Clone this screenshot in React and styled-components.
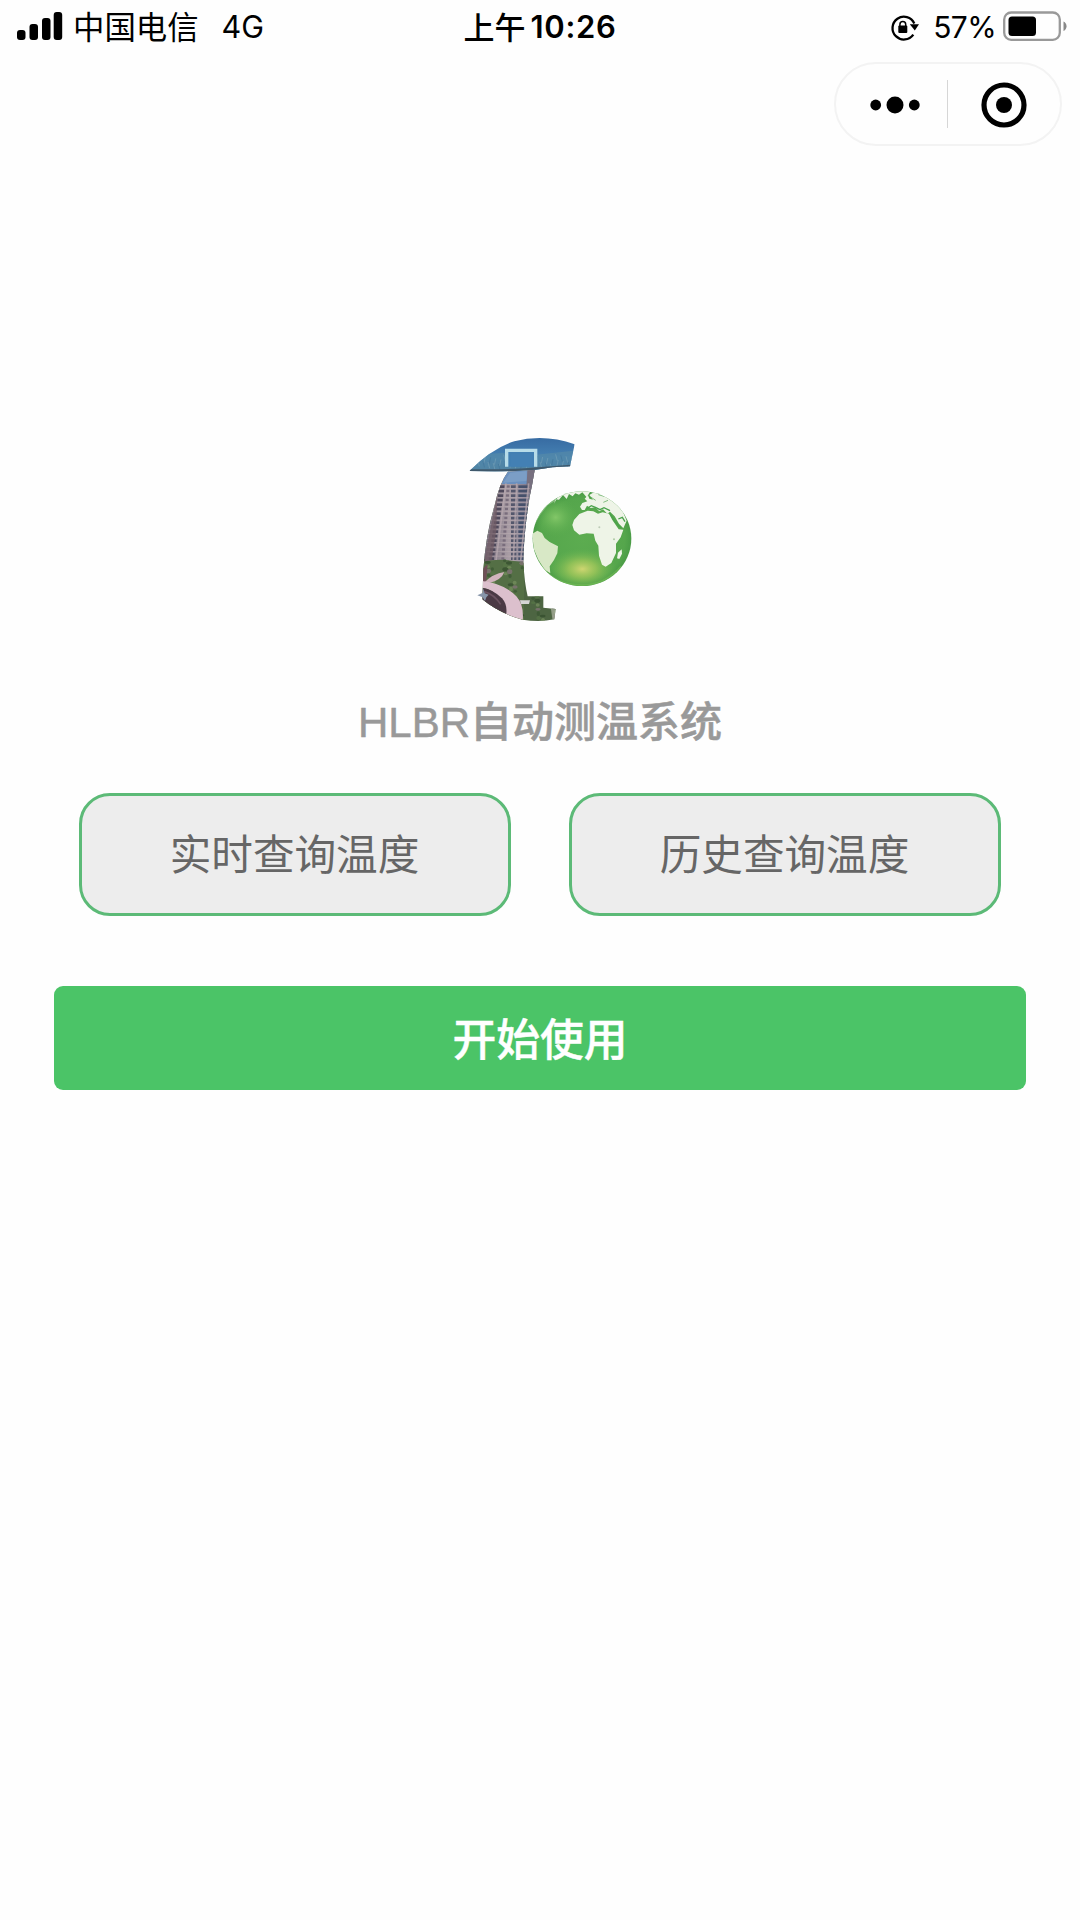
import React from 'react';
import styled, { createGlobalStyle } from 'styled-components';

const GlobalStyle = createGlobalStyle`
  * { box-sizing: border-box; }
  body { margin: 0; background: #fefefe; }
`;

const sans = `"Inter", "Noto Sans CJK SC", sans-serif`;

const Screen = styled.div`
  width: 1080px;
  height: 1920px;
  overflow: hidden;
  display: flex;
  flex-direction: column;
  background: #fefefe;
  color: #000;
  font-family: ${sans};
`;

const StatusBar = styled.header`
  display: grid;
  grid-template-columns: 1fr auto 1fr;
  height: 54px;
  padding: 0 13px 0 17px;
  align-items: center;
  font-size: 31px;
  line-height: 54px;
  white-space: nowrap;
`;

const StatusGroup = styled.div`
  display: flex;
  align-items: center;
  height: 54px;
  justify-content: ${(p) => (p.$end ? 'flex-end' : 'flex-start')};
`;

const Carrier = styled.span`
  margin-left: 10px;
  font-size: 31.4px;
  line-height: 52px;
  padding-bottom: 2px;
  font-family: "Noto Sans CJK SC", sans-serif;
`;

const Network = styled.span`
  margin-left: 23px;
  font-size: 30.5px;
`;

const Clock = styled.div`
  display: flex;
  gap: 5px;
  margin-right: 4px;
  font-family: "Inter", sans-serif;
  font-weight: 600;
  font-size: 31px;
  letter-spacing: 0.7px;
`;

const Meridiem = styled.span`
  font-family: "Noto Sans CJK SC", sans-serif;
  font-weight: 500;
  font-size: 31px;
  letter-spacing: 0;
  line-height: 52px;
  padding-bottom: 2px;
`;

const Percent = styled.span`
  margin: 0 7px 0 13px;
  font-size: 30px;
  letter-spacing: -0.6px;
`;

const CapsuleRow = styled.div`
  display: flex;
  justify-content: flex-end;
  padding: 8px 18px 0 0;
`;

const Capsule = styled.div`
  display: flex;
  align-items: center;
  width: 228px;
  height: 84px;
  border: 2px solid #f3f3f3;
  border-radius: 42px;
`;

const CapsuleButton = styled.button`
  width: ${(p) => p.$width};
  height: 100%;
  padding: ${(p) => p.$pad};
  border: 0;
  background: none;
  color: #000;
  display: flex;
  align-items: center;
  justify-content: center;
`;

const Divider = styled.i`
  width: 1px;
  height: 48px;
  background: #d6d6d6;
`;

const Main = styled.main`
  display: flex;
  flex-direction: column;
  align-items: center;
  padding: 274px 54px 0;
`;

const LogoBox = styled.div`
  width: 230px;
  height: 220px;
  margin-right: 10px;
`;

const Title = styled.h1`
  margin: 52px 0 0;
  height: 62px;
  line-height: 62px;
  font-family: "Liberation Sans", "Noto Sans CJK SC", sans-serif;
  font-size: 42px;
  font-weight: 500;
  color: #999;
  -webkit-text-stroke: 0.5px #999;
  white-space: nowrap;
`;

const Choices = styled.div`
  display: flex;
  gap: 58px;
  margin-top: 39px;
`;

const Choice = styled.button`
  width: 432px;
  height: 123px;
  padding: 0 1px 5px 0;
  border: 3px solid #5cba77;
  border-radius: 31px;
  background: #ededed;
  color: #666;
  font-family: "Noto Sans CJK SC", sans-serif;
  font-size: 41.6px;
  line-height: 60px;
`;

const Start = styled.button`
  width: 972px;
  height: 104px;
  margin-top: 70px;
  padding: 0 0 3px;
  border: 0;
  border-radius: 9px;
  background: #4bc467;
  color: #fff;
  font-family: "Noto Sans CJK SC", sans-serif;
  font-size: 43.8px;
  font-weight: 500;
  line-height: 60px;
  -webkit-text-stroke: 0.4px #fff;
`;

const Signal = () => (
  <svg width="46" height="54" viewBox="0 0 46 54">
    <rect x="0" y="30" width="8.5" height="10" rx="3" />
    <rect x="12.5" y="24" width="8.5" height="16" rx="3" />
    <rect x="25" y="18" width="8.5" height="22" rx="3" />
    <rect x="36.7" y="12" width="8.5" height="28" rx="3" />
  </svg>
);

const RotationLock = () => (
  <svg width="30" height="54" viewBox="0 0 30 54">
    <path d="M23.3 34.6A11.4 11.4 0 1 1 24.3 23.4" fill="none" stroke="#000" strokeWidth="2.3" />
    <path d="M19.8 24.2h9.2l-4.2 6.2z" />
    <rect x="8.3" y="25.5" width="9" height="7.5" rx="1" />
    <path d="M9.9 27v-2.6a2.9 2.9 0 0 1 5.8 0V27" fill="none" stroke="#000" strokeWidth="1.5" />
  </svg>
);

const Battery = () => (
  <svg width="64" height="54" viewBox="0 0 64 54">
    <rect x="1.2" y="12.5" width="55.6" height="27.3" rx="7" fill="none" stroke="#999" strokeWidth="2.3" />
    <rect x="5.5" y="16.5" width="27.5" height="19.5" rx="3.5" />
    <path d="M60.5 21.5c4 1.5 4 8 0 9.5z" fill="#888" />
  </svg>
);

const Dots = () => (
  <svg width="50" height="18" viewBox="0 0 50 18">
    <circle cx="5.7" cy="9" r="5.4" />
    <circle cx="25" cy="9" r="8.5" />
    <circle cx="44.3" cy="9" r="5.4" />
  </svg>
);

const Target = () => (
  <svg width="46" height="46" viewBox="0 0 46 46">
    <circle cx="23" cy="23" r="20" fill="none" stroke="#000" strokeWidth="5.2" />
    <circle cx="23" cy="23" r="8" />
  </svg>
);

const floors = Array.from({ length: 17 }, (_, i) => 196 + i * 13.5);
const shrubs = Array.from({ length: 90 }, (_, i) => ({
  x: 190 + ((i * 67) % 218),
  y: 420 + ((i * 41) % 182),
  c: ['#3b5733', '#748e5e', '#577547', '#84737a', '#344d2d'][i % 5],
}));
const glints = Array.from({ length: 38 }, (_, i) => ({
  x: 165 + i * 7.8,
  y: 103 + ((i * 17) % 31),
}));

const Logo = () => (
  <svg width="230" height="220" viewBox="0 0 690 660">
    <defs>
      <linearGradient id="sky" x1="0" y1="0" x2="0" y2="1">
        <stop offset="0" stopColor="#3568a0" />
        <stop offset=".6" stopColor="#4682b3" />
        <stop offset="1" stopColor="#477697" />
      </linearGradient>
      <linearGradient id="tower" x1="0" y1="0" x2="1" y2="0">
        <stop offset="0" stopColor="#6e6575" />
        <stop offset=".5" stopColor="#a99da5" />
        <stop offset="1" stopColor="#6c6c86" />
      </linearGradient>
      <radialGradient id="sea" cx=".5" cy=".5" r=".52">
        <stop offset="0" stopColor="#5cac50" />
        <stop offset=".8" stopColor="#55a64c" />
        <stop offset="1" stopColor="#439542" />
      </radialGradient>
      <radialGradient id="glow">
        <stop offset="0" stopColor="#cfd671" />
        <stop offset=".4" stopColor="#a4c95b" stopOpacity=".75" />
        <stop offset="1" stopColor="#66b552" stopOpacity="0" />
      </radialGradient>
      <radialGradient id="shine">
        <stop offset="0" stopColor="#83c768" />
        <stop offset="1" stopColor="#5cad4e" stopOpacity="0" />
      </radialGradient>
      <clipPath id="roof">
        <path d="M148 153Q218 84 283 64Q373 40 464 73L450 139Q397 139 344 150Q260 157 148 153Z" />
      </clipPath>
      <clipPath id="stem">
        <path d="M264 155L344 150Q337 194 329 230Q311 340 310 424Q313 488 323 529L370 529L370 563L407 567L403 598Q358 607 308 599Q236 579 187 538L190 450Q197 345 224 256Q237 191 264 155Z" />
      </clipPath>
      <clipPath id="globe"><ellipse cx="486" cy="356" rx="148" ry="142" /></clipPath>
    </defs>

    <g clipPath="url(#roof)">
      <rect x="145" y="45" width="325" height="115" fill="url(#sky)" />
      <path d="M150 128L198 102L258 98L348 104L460 92L454 146L150 158Z" fill="#568aa8" opacity=".65" />
      {glints.map((g, i) => (
        <path key={i} d={`M${g.x} ${g.y}l${i % 2 ? 5 : -4} 19`} stroke={i % 3 ? '#7ca4b9' : '#3f7297'} strokeWidth="3" opacity=".55" />
      ))}
      <path d="M260 140V91H347V140" fill="#427fb3" stroke="#b7dce9" strokeWidth="10" />
      <path d="M272 102H337V139H272Z" fill="#4380b4" />
      <path d="M150 151Q260 153 344 146L453 138" fill="none" stroke="#3f586b" strokeWidth="7" />
    </g>

    <g clipPath="url(#stem)">
      <rect x="180" y="145" width="235" height="465" fill="#4d6542" />
      <path d="M255 145H350V425H185L205 300Z" fill="url(#tower)" />
      <path d="M260 148H322V192H245Z" fill="#6b91bf" />
      <path d="M270 158L320 153V183L250 188Z" fill="#86a6cc" opacity=".6" />
      <path d="M323 150H348L339 230L318 210Z" fill="#77707f" />
      {floors.map((y, i) => (
        <g key={y}>
          <rect x={238 - i * 2} y={y} width="16" height="8" fill="#4f4a5b" />
          <rect x={260 - i} y={y} width="9" height="7" fill="#7a6e7d" />
          <rect x="273" y={y} width="16" height="8" fill="#55576c" />
          <rect x="295" y={y} width="29" height="8" fill="#46516b" />
          <path d={`M200 ${y + 10}H330`} stroke="#c2b4b6" strokeWidth="2" opacity=".65" />
        </g>
      ))}
      <path d="M258 190L228 422M290 190L280 422M326 190L302 422" stroke="#b7a8af" strokeWidth="5" opacity=".75" />
      <path d="M232 220L190 435V485H205L229 330Z" fill="#705c66" opacity=".75" />
      <path d="M190 425Q247 412 312 429V600H185Z" fill="#546f45" />
      {shrubs.map((s, i) => (
        <ellipse key={i} cx={s.x} cy={s.y} rx={5 + (i % 5)} ry={4 + (i % 4)} fill={s.c} opacity=".75" />
      ))}
      <path d="M187 448L203 432L198 488H187Z" fill="#6f4f57" />
      <path d="M188 492Q220 459 253 456Q244 480 210 488Z" fill="#d1b4bd" />
      <path d="M184 483Q252 490 289 529Q313 555 308 604L257 583Q264 549 226 522Q208 505 184 503Z" fill="#dcc0cd" />
      <path d="M185 503Q220 508 246 535Q264 555 258 588Q215 571 183 537Z" fill="#4b3a45" />
      <path d="M193 515Q223 524 242 553" fill="none" stroke="#6b5361" strokeWidth="5" />
      <path d="M300 541H330L327 552H303Z" fill="#d4d5d5" />
      <path d="M392 562H410V602H398Z" fill="#a9af9d" opacity=".75" />
    </g>
    <path d="M172 526L189 518L190 505L194 520L206 524L199 532L195 543L188 532Z" fill="#8795a9" />

    <g clipPath="url(#globe)">
      <rect x="335" y="210" width="305" height="295" fill="url(#sea)" />
      <ellipse cx="407" cy="292" rx="67" ry="60" fill="url(#shine)" />
      <ellipse cx="487" cy="447" rx="105" ry="62" fill="url(#glow)" />
      <path d="M333 360V290L358 259L394 226L415 220L405 244L383 256L360 286L344 314Z" fill="#dcebd2" opacity=".35" />
      <g fill="#eef4e7">
        <path d="M401 252L413 232L431 218L487 208L512 213L500 232L487 217L477 224L466 220L458 229L447 222L440 237L429 225L417 239L407 238Z" />
        <path d="M486 270L480 260L487 249L502 244L494 236L504 226L508 236L519 239L508 225L524 215L540 216L577 235L606 268L620 302L610 325L597 311L584 289L570 275L562 281L549 268L538 274L526 262L512 264L501 257L494 270Z" />
        <path d="M462 300L478 282L503 272L520 274L534 281L548 277L567 281L577 300L596 328L610 329L602 352L588 371L588 399L574 429L557 440L546 434L537 407L535 377L526 362L521 341L500 340L478 344L462 331L457 315Z" />
        <path d="M337 341L352 332L366 339L374 354L389 366L414 379L412 400L402 420L389 439L391 460L374 449L355 419L341 386Z" fill="#d8e8c6" />
        <path d="M594 398L605 388L606 401L598 417L591 415Z" />
      </g>
      <g fill="none" stroke="#4aa24b" strokeWidth="4">
        <path d="M499 267L514 257L528 263L540 269L552 263L570 272" />
        <path d="M570 281L584 304L603 324M595 297L607 292L615 305" />
        <path d="M512 231L527 241M535 224L552 229M550 247L564 241" strokeWidth="2" />
      </g>
      <path d="M345 408Q380 480 457 493Q545 507 603 439" fill="none" stroke="#76bd56" strokeWidth="5" opacity=".6" />
      <circle cx="538" cy="322" r="3" fill="#bdcbb7" />
      <circle cx="582" cy="358" r="3" fill="#aecaa5" />
    </g>
  </svg>
);

export default function App() {
  return (
    <Screen>
      <GlobalStyle />
      <StatusBar>
        <StatusGroup>
          <Signal />
          <Carrier>中国电信</Carrier>
          <Network>4G</Network>
        </StatusGroup>
        <Clock>
          <Meridiem>上午</Meridiem>
          <span>10:26</span>
        </Clock>
        <StatusGroup $end>
          <RotationLock />
          <Percent>57%</Percent>
          <Battery />
        </StatusGroup>
      </StatusBar>
      <CapsuleRow>
        <Capsule>
          <CapsuleButton $width="111px" $pad="2px 0 0 6px"><Dots /></CapsuleButton>
          <Divider />
          <CapsuleButton $width="112px" $pad="1px 0 0"><Target /></CapsuleButton>
        </Capsule>
      </CapsuleRow>
      <Main>
        <LogoBox><Logo /></LogoBox>
        <Title>HLBR自动测温系统</Title>
        <Choices>
          <Choice>实时查询温度</Choice>
          <Choice>历史查询温度</Choice>
        </Choices>
        <Start>开始使用</Start>
      </Main>
    </Screen>
  );
}
